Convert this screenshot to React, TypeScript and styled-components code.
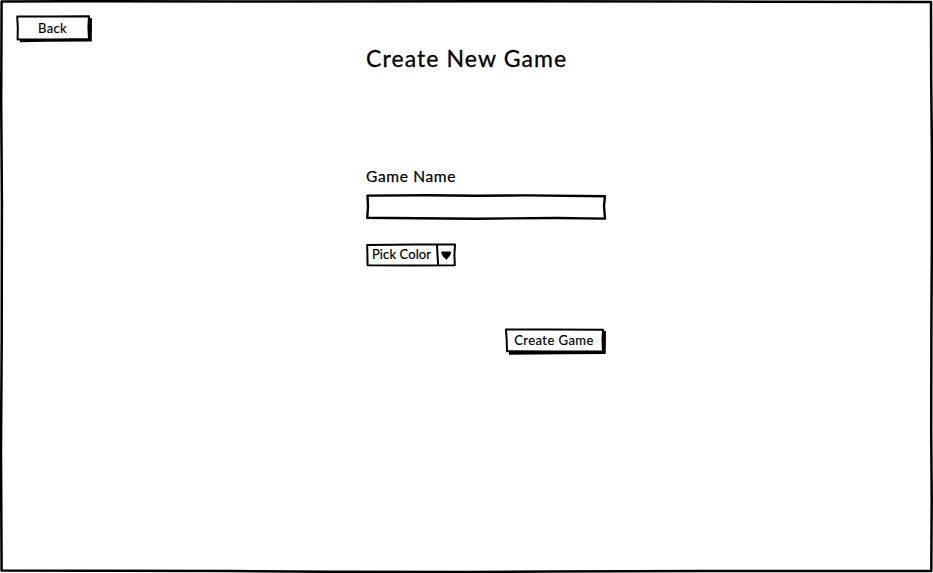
import React from "react";
import styled, { createGlobalStyle } from "styled-components";

const GlobalStyle = createGlobalStyle`
  *, *::before, *::after { box-sizing: border-box; }
  body { margin: 0; background: #fff; overflow: hidden; }
`;

const Window = styled.main`
  position: relative;
  width: 933px;
  height: 573px;
  padding: 15px 0 0 16px;
  background: #fff;
  color: #000;
  font-family: Lato, "Open Sans", sans-serif;
`;

const Sketch = styled.svg`
  position: absolute;
  inset: 0;
  width: 100%;
  height: 100%;
  overflow: visible;
  pointer-events: none;
  fill: none;
  stroke: #000;
  stroke-width: 2;
  stroke-linejoin: round;
  stroke-linecap: round;
`;

const SketchButton = styled.button<{ $width: number; $height: number; $spacing: number }>`
  position: relative;
  display: flex;
  align-items: center;
  justify-content: center;
  width: ${(p) => p.$width}px;
  height: ${(p) => p.$height}px;
  padding: 0 3px 3px 0;
  border: 0;
  background: transparent;
  color: #000;
  font: 13px/16px Lato, sans-serif;
  letter-spacing: ${(p) => p.$spacing}px;
  -webkit-text-stroke: 0.2px #000;
  white-space: nowrap;
`;

const Form = styled.form`
  display: flex;
  flex-direction: column;
  align-items: flex-start;
  width: 240px;
  margin: -1px 0 0 350px;
`;

const Title = styled.h1`
  margin: 0 0 92px;
  font-size: 23px;
  line-height: 32px;
  font-weight: 400;
  letter-spacing: 1.1px;
  white-space: nowrap;
  -webkit-text-stroke: 0.3px #000;
`;

const Label = styled.label`
  font-size: 15.5px;
  line-height: 20px;
  height: 28px;
  letter-spacing: 0.65px;
  -webkit-text-stroke: 0.25px #000;
`;

const Field = styled.div`
  position: relative;
  width: 240px;
  height: 26px;
  margin-bottom: 23px;
`;

const TextInput = styled.input`
  width: 100%;
  height: 100%;
  padding: 0 6px;
  border: 0;
  outline: 0;
  background: transparent;
  font: inherit;
`;

const Select = styled.div`
  position: relative;
  width: 90px;
  height: 24px;
  padding: 2px 0 0 6px;
  margin-bottom: 61px;
  font-size: 13px;
  line-height: 18px;
  letter-spacing: 0.1px;
  white-space: nowrap;
  -webkit-text-stroke: 0.2px #000;
`;

const Actions = styled.div`
  align-self: flex-end;
`;

export default function App() {
  return (
    <>
      <GlobalStyle />
      <Window>
        <Sketch viewBox="0 0 933 573">
          <path
            strokeWidth="2.5"
            d="M1.6 1.4L85 1.2L250 1.5L500 1.3L700 1.6L931 2L931.2 80L931.9 150L931.9 235L931.4 330L931.2 430L931.7 500L931.3 571L700 570.9L550 571.4L470 571.9L330 571.8L230 571.1L100 570.7L1.6 570.5L1 450L1.7 340L1.9 200L1.2 100Z"
          />
        </Sketch>

        <SketchButton type="button" $width={76} $height={28} $spacing={0.3}>
          <Sketch viewBox="0 0 76 28">
            <path fill="#000" stroke="none" d="M73 3L76 3.2L75.8 26.5L30 26.7L4 27.2L4 24L73 24Z" />
            <path d="M1.2 1.5L38 1.4L73 1.2L72.4 12L73 24.1L40 24.5L1.6 24.6L1.8 13Z" />
          </Sketch>
          Back
        </SketchButton>

        <Form onSubmit={(e) => e.preventDefault()}>
          <Title>Create New Game</Title>
          <Label htmlFor="game-name">Game Name</Label>
          <Field>
            <TextInput id="game-name" />
            <Sketch viewBox="0 0 240 26">
              <path
                strokeWidth="2.4"
                d="M1.5 1.6L60 1.3L110 1.8L160 1.4L239 2.2L238 12L239 24.6L190 24L110 24.7L50 24.2L1.3 23.8L2 12Z"
              />
            </Sketch>
          </Field>
          <Select>
            Pick Color
            <Sketch viewBox="0 0 90 24">
              <path d="M1.2 1.9L50 1.5L89 1.4L88.4 12L88.8 22.2L45 22.6L1.6 22.2L1.4 12Z" />
              <path d="M71 2L71.5 12L72.2 22" />
              <path fill="#000" strokeWidth="1" d="M76 9L84.5 9L84 12L80.5 16.2L77 12.8Z" />
            </Sketch>
          </Select>
          <Actions>
            <SketchButton type="submit" $width={101} $height={27} $spacing={0.45}>
              <Sketch viewBox="0 0 101 27">
                <path fill="#000" stroke="none" d="M98 3L101 3.1L100.7 26.1L60 26.3L4 26.8L4 23L98 23Z" />
                <path d="M1 1.6L45 1.5L98 1.8L97.5 12L98 23.2L50 23.6L2 23.3L1.7 12Z" />
              </Sketch>
              Create Game
            </SketchButton>
          </Actions>
        </Form>
      </Window>
    </>
  );
}
